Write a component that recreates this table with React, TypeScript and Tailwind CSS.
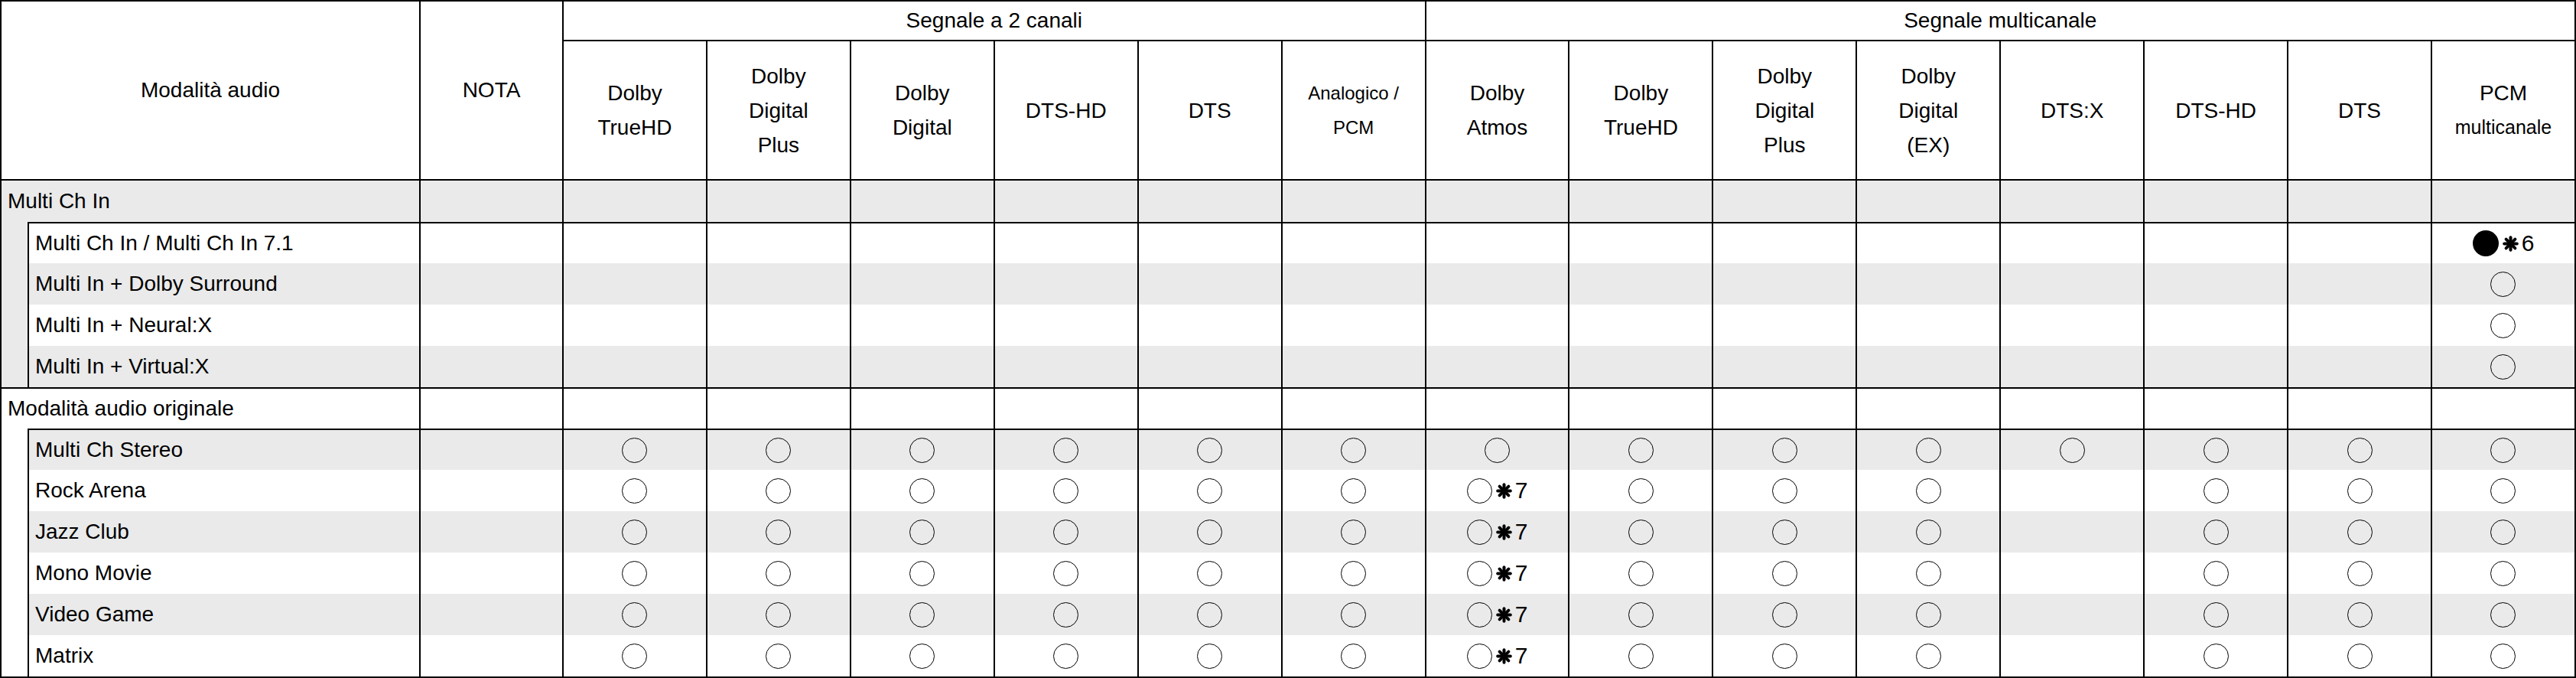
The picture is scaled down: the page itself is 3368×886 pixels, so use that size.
import React from "react";

type Mark = "" | "o" | "o7" | "f6";

const TWO_CH: string[][] = [
  ["Dolby", "TrueHD"],
  ["Dolby", "Digital", "Plus"],
  ["Dolby", "Digital"],
  ["DTS-HD"],
  ["DTS"],
  ["Analogico /", "PCM"],
];

const MULTI_CH: string[][] = [
  ["Dolby", "Atmos"],
  ["Dolby", "TrueHD"],
  ["Dolby", "Digital", "Plus"],
  ["Dolby", "Digital", "(EX)"],
  ["DTS:X"],
  ["DTS-HD"],
  ["DTS"],
  ["PCM", "multicanale"],
];

const none13: Mark[] = Array(13).fill("");
const allO: Mark[] = Array(14).fill("o");
const surround: Mark[] = ["o", "o", "o", "o", "o", "o", "o7", "o", "o", "o", "", "o", "o", "o"];

const GROUPS: { title: string; gray: boolean; rows: { label: string; marks: Mark[] }[] }[] = [
  {
    title: "Multi Ch In",
    gray: true,
    rows: [
      { label: "Multi Ch In / Multi Ch In 7.1", marks: [...none13, "f6"] },
      { label: "Multi In + Dolby Surround", marks: [...none13, "o"] },
      { label: "Multi In + Neural:X", marks: [...none13, "o"] },
      { label: "Multi In + Virtual:X", marks: [...none13, "o"] },
    ],
  },
  {
    title: "Modalità audio originale",
    gray: false,
    rows: [
      { label: "Multi Ch Stereo", marks: allO },
      { label: "Rock Arena", marks: surround },
      { label: "Jazz Club", marks: surround },
      { label: "Mono Movie", marks: surround },
      { label: "Video Game", marks: surround },
      { label: "Matrix", marks: surround },
    ],
  },
];

const Circle = ({ filled }: { filled?: boolean }) =>
  filled ? (
    <span className="inline-block w-[34px] h-[34px] rounded-full bg-black" />
  ) : (
    <span className="inline-block w-[33px] h-[33px] rounded-full border-[1.5px] border-black" />
  );

// heavy asterisk used for the footnote marks
const Star = () => (
  <svg width="21" height="21" viewBox="0 0 21 21" className="block">
    <g stroke="black" strokeWidth="4" strokeLinecap="round">
      <line x1="10.5" y1="2.2" x2="10.5" y2="18.8" />
      <line x1="2.2" y1="10.5" x2="18.8" y2="10.5" />
      <line x1="4.6" y1="4.6" x2="16.4" y2="16.4" />
      <line x1="16.4" y1="4.6" x2="4.6" y2="16.4" />
    </g>
  </svg>
);

const MarkCell = ({ mark }: { mark: Mark }) => {
  if (mark === "o")
    return (
      <div className="flex justify-center items-center">
        <Circle />
      </div>
    );
  if (mark === "o7" || mark === "f6")
    return (
      <div className="flex justify-center items-center gap-[5px]">
        <Circle filled={mark === "f6"} />
        <div className="flex items-center gap-[4px]">
          <Star />
          <span className="text-[30px] leading-none">{mark === "o7" ? "7" : "6"}</span>
        </div>
      </div>
    );
  return null;
};

const HeadLines = ({ lines, small }: { lines: string[]; small?: boolean }) => (
  <div className="flex flex-col items-center leading-[45px]">
    {lines.map((l, i) => (
      <span key={i} className={small ? "text-[24px] whitespace-nowrap" : "whitespace-nowrap"}>
        {l}
      </span>
    ))}
  </div>
);

export default function App() {
  return (
    <div className="w-[3368px] h-[886px] bg-white overflow-hidden text-black text-[28px] font-['Liberation_Sans',Arial,sans-serif]">
      <table className="table-fixed border-separate border-spacing-0 w-[3368px]">
        <colgroup>
          <col className="w-[36px]" />
          <col className="w-[514px]" />
          <col className="w-[187px]" />
          {Array.from({ length: 14 }).map((_, i) => (
            <col key={i} />
          ))}
        </colgroup>
        <thead>
          <tr className="h-[52px]">
            <td colSpan={2} rowSpan={2} className="border-l-2 border-t-2 border-r-2 border-black text-center align-middle">
              Modalità audio
            </td>
            <td rowSpan={2} className="border-t-2 border-r-2 border-black text-center align-middle">
              NOTA
            </td>
            <td colSpan={6} className="border-t-2 border-r-2 border-black text-center align-middle leading-none">
              Segnale a 2 canali
            </td>
            <td colSpan={8} className="border-t-2 border-r-2 border-black text-center align-middle leading-none">
              Segnale multicanale
            </td>
          </tr>
          <tr className="h-[182px]">
            {TWO_CH.map((lines, i) => (
              <td key={"a" + i} className="border-t-2 border-r-2 border-black align-middle">
                <HeadLines lines={lines} small={i === 5} />
              </td>
            ))}
            {MULTI_CH.map((lines, i) => (
              <td key={"b" + i} className="border-t-2 border-r-2 border-black align-middle">
                {i === 7 ? (
                  <div className="flex flex-col items-center leading-[45px]">
                    <span>PCM</span>
                    <span className="text-[25px]">multicanale</span>
                  </div>
                ) : (
                  <HeadLines lines={lines} />
                )}
              </td>
            ))}
          </tr>
        </thead>
        <tbody>
          {GROUPS.map((g, gi) => {
            const bg = g.gray ? "bg-[#eaeaea]" : "bg-white";
            return (
              <React.Fragment key={gi}>
                <tr className={gi === 0 ? "h-[56px] bg-[#eaeaea]" : "h-[54px] bg-white"}>
                  <td colSpan={2} className="border-l-2 border-t-2 border-r-2 border-black pl-2 text-left align-middle leading-none whitespace-nowrap">
                    {g.title}
                  </td>
                  {Array.from({ length: 15 }).map((_, i) => (
                    <td key={i} className="border-t-2 border-r-2 border-black" />
                  ))}
                </tr>
                {g.rows.map((r, ri) => {
                  const first = ri === 0;
                  const last = gi === GROUPS.length - 1 && ri === g.rows.length - 1;
                  const rowBg = ri % 2 === (g.gray ? 1 : 0) ? "bg-[#eaeaea]" : "bg-white";
                  const edge = `${first ? "border-t-2" : ""} ${last ? "border-b-2" : ""}`;
                  return (
                    <tr key={ri} className={`${last ? "h-[56px]" : "h-[54px]"} ${rowBg}`}>
                      <td className={`${bg} border-l-2 border-black ${last ? "border-b-2" : ""}`} />
                      <td className={`border-l-2 border-r-2 border-black pl-2 text-left align-middle leading-none whitespace-nowrap ${edge}`}>
                        {r.label}
                      </td>
                      <td className={`border-r-2 border-black ${edge}`} />
                      {r.marks.map((m, mi) => (
                        <td key={mi} className={`border-r-2 border-black align-middle ${edge}`}>
                          <MarkCell mark={m} />
                        </td>
                      ))}
                    </tr>
                  );
                })}
              </React.Fragment>
            );
          })}
        </tbody>
      </table>
    </div>
  );
}
